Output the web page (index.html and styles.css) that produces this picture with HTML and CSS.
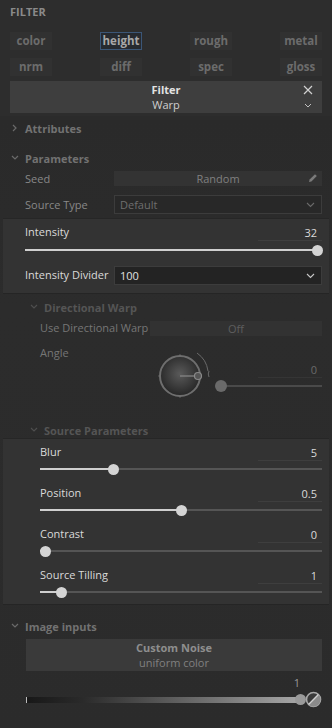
FILE: index.html
```html
<!DOCTYPE html>
<html lang="en">
<head>
  <meta charset="UTF-8">
  <title>Filter | Warp</title>
  <link rel="stylesheet" href="styles.css">
</head>
<body>
  <div class="app">
    <div class="top">
      <div class="title">FILTER</div>
      <div class="chans">
        <div class="chan">color</div>
        <div class="chan active">height</div>
        <div class="chan">rough</div>
        <div class="chan">metal</div>
        <div class="chan">nrm</div>
        <div class="chan">diff</div>
        <div class="chan">spec</div>
        <div class="chan">gloss</div>
      </div>
      <div class="filter-head">
        <div class="fh-title">Filter</div>
        <div class="fh-sub">Warp</div>
        <svg class="fh-close" width="10" height="10" viewBox="0 0 10 10"><path d="M1 1L9 9M9 1L1 9" stroke="#d0d0d0" stroke-width="1.2"/></svg>
        <svg class="fh-chev" width="8" height="5" viewBox="0 0 8 5"><path d="M1 1L4 4L7 1" stroke="#c0c0c0" fill="none" stroke-width="1"/></svg>
      </div>
    </div>

    <div class="panel">
      <div class="sec-head attr">
        <svg width="8" height="8" viewBox="0 0 8 8"><path d="M2 1L5 4L2 7" stroke="#6a6a6a" fill="none" stroke-width="1.2"/></svg>
        <span>Attributes</span>
      </div>

      <div class="sec-head params">
        <svg width="8" height="8" viewBox="0 0 8 8"><path d="M1 2L4 5L7 2" stroke="#6a6a6a" fill="none" stroke-width="1.2"/></svg>
        <span>Parameters</span>
      </div>

      <div class="row seed">
        <div class="lbl dim">Seed</div>
        <div class="field">
          <span>Random</span>
          <svg class="pencil" width="10" height="10" viewBox="0 0 10 10"><path d="M1 9L1.6 6.6L7 1.2L8.8 3L3.4 8.4Z" fill="#7a7a7a"/></svg>
        </div>
      </div>

      <div class="row stype">
        <div class="lbl dim">Source Type</div>
        <div class="select dimsel">
          <span>Default</span>
          <svg width="9" height="6" viewBox="0 0 9 6"><path d="M1 1L4.5 4.5L8 1" stroke="#6a6a6a" fill="none" stroke-width="1.1"/></svg>
        </div>
      </div>

      <div class="block intensity">
        <div class="item">
          <div class="item-top">
            <span class="lbl bright">Intensity</span>
            <span class="val">32</span>
          </div>
          <div class="slider"><div class="fill" style="width:100%"></div><div class="thumb" style="left:100%"></div></div>
        </div>
        <div class="row divider">
          <div class="lbl bright">Intensity Divider</div>
          <div class="select">
            <span>100</span>
            <svg width="9" height="6" viewBox="0 0 9 6"><path d="M1 1L4.5 4.5L8 1" stroke="#c8c8c8" fill="none" stroke-width="1.1"/></svg>
          </div>
        </div>
      </div>

      <div class="sec-head sub dwarp">
        <svg width="8" height="8" viewBox="0 0 8 8"><path d="M1 2L4 5L7 2" stroke="#4e4e4e" fill="none" stroke-width="1.2"/></svg>
        <span>Directional Warp</span>
      </div>

      <div class="row usedw">
        <div class="lbl faint">Use Directional Warp</div>
        <div class="field off">Off</div>
      </div>

      <div class="angle">
        <div class="lbl faint">Angle</div>
        <svg class="dial" width="64" height="56" viewBox="0 0 64 56">
          <defs>
            <radialGradient id="dg" cx="50%" cy="45%" r="55%">
              <stop offset="0" stop-color="#5a5a5a"/>
              <stop offset="1" stop-color="#262626"/>
            </radialGradient>
          </defs>
          <circle cx="26" cy="29" r="20" fill="url(#dg)" stroke="#6e6e6e" stroke-width="2"/>
          <path d="M26 7.5V10M26 48V50.5M4.5 29H7" stroke="#6e6e6e" stroke-width="1.5"/>
          <path d="M26 29H44" stroke="#8a8a8a" stroke-width="1.2"/>
          <circle cx="44" cy="29" r="3.5" fill="#555" stroke="#8a8a8a" stroke-width="1.2"/>
          <path d="M43 6A26 26 0 0 1 54 24" stroke="#6a6a6a" fill="none" stroke-width="1"/>
          <path d="M55 24Q53.5 27 55 30" stroke="#6a6a6a" fill="none" stroke-width="1"/>
        </svg>
        <div class="angle-ctl">
          <div class="val faintval">0</div>
          <div class="slider dimslider"><div class="thumb" style="left:0%"></div></div>
        </div>
      </div>

      <div class="sec-head sub sparams">
        <svg width="8" height="8" viewBox="0 0 8 8"><path d="M1 2L4 5L7 2" stroke="#4e4e4e" fill="none" stroke-width="1.2"/></svg>
        <span>Source Parameters</span>
      </div>

      <div class="block source">
        <div class="item">
          <div class="item-top"><span class="lbl bright">Blur</span><span class="val">5</span></div>
          <div class="slider"><div class="fill" style="width:26%"></div><div class="thumb" style="left:26%"></div></div>
        </div>
        <div class="item">
          <div class="item-top"><span class="lbl bright">Position</span><span class="val">0.5</span></div>
          <div class="slider"><div class="fill" style="width:50%"></div><div class="thumb" style="left:50%"></div></div>
        </div>
        <div class="item">
          <div class="item-top"><span class="lbl bright">Contrast</span><span class="val">0</span></div>
          <div class="slider"><div class="fill" style="width:1.8%"></div><div class="thumb" style="left:1.8%"></div></div>
        </div>
        <div class="item">
          <div class="item-top"><span class="lbl bright">Source Tilling</span><span class="val">1</span></div>
          <div class="slider"><div class="fill" style="width:7.4%"></div><div class="thumb" style="left:7.4%"></div></div>
        </div>
      </div>

      <div class="sec-head inputs">
        <svg width="8" height="8" viewBox="0 0 8 8"><path d="M1 2L4 5L7 2" stroke="#6a6a6a" fill="none" stroke-width="1.2"/></svg>
        <span>Image inputs</span>
      </div>

      <div class="noise">
        <div class="noise-title">Custom Noise</div>
        <div class="noise-sub">uniform color</div>
      </div>

      <div class="grad-val">1</div>
      <div class="grad-row">
        <div class="grad"><div class="grad-thumb"></div></div>
        <svg class="grad-icon" width="17" height="17" viewBox="0 0 17 17">
          <circle cx="8.5" cy="8.5" r="7" fill="#3a3a3a" stroke="#a8a8a8" stroke-width="1.6"/>
          <path d="M3.6 13.4L13.4 3.6A7 7 0 0 1 13.4 13.4A7 7 0 0 1 3.6 13.4Z" fill="#8a8a8a"/>
          <path d="M3.6 13.4L13.4 3.6" stroke="#cfcfcf" stroke-width="1.4"/>
        </svg>
      </div>
    </div>
  </div>
</body>
</html>
```

FILE: styles.css
```css
* {
  box-sizing: border-box;
}

body {
  margin: 0;
  background: #2b2b2b;
  font-family: 'Open Sans', 'Liberation Sans', sans-serif;
  font-size: 11px;
  color: #cfcfcf;
}

.app {
  width: 332px;
  height: 728px;
  overflow: hidden;
}

.top {
  padding: 5px 10px 3px;
  background: #2d2d2d;
}

.title {
  height: 14px;
  line-height: 14px;
  font-weight: bold;
  font-size: 11px;
  color: #8a8a8a;
}

.chans {
  margin-top: 13px;
  display: grid;
  grid-template-columns: repeat(4, 42px);
  grid-auto-rows: 18px;
  row-gap: 8px;
  justify-content: space-between;
}

.chan {
  background: #313131;
  color: #6c6c6c;
  font-weight: bold;
  font-size: 11.5px;
  text-align: center;
  line-height: 18px;
}

.chan.active {
  background: #262a30;
  border: 1px solid #3b5677;
  color: #a8a8a8;
  line-height: 16px;
}

.filter-head {
  position: relative;
  margin-top: 5px;
  height: 32px;
  background: #3e3e3e;
  text-align: center;
  padding-top: 1px;
}

.fh-title {
  font-weight: bold;
  color: #e2e2e2;
  line-height: 15px;
}

.fh-sub {
  color: #cfcfcf;
  line-height: 15px;
}

.fh-close {
  position: absolute;
  right: 9px;
  top: 4px;
}

.fh-chev {
  position: absolute;
  right: 10px;
  top: 22px;
}

.panel {
  background: linear-gradient(#2a2a2a, #2c2c2c 30%, #2b2b2b);
  padding-bottom: 40px;
}

.sec-head {
  height: 16px;
  display: flex;
  align-items: center;
  gap: 6px;
  padding-left: 11px;
  font-weight: bold;
  color: #727272;
}

.sec-head.sub {
  padding-left: 30px;
  color: #555;
}

.attr {
  margin-top: 4px;
}

.params {
  margin-top: 14px;
}

.row {
  display: flex;
  align-items: center;
  padding: 0 10px 0 25px;
}

.row .lbl {
  width: 89px;
  flex-shrink: 0;
  white-space: nowrap;
}

.dim {
  color: #888;
}

.faint {
  color: #767676;
}

.bright {
  color: #dadada;
}

.seed {
  margin-top: 4px;
  height: 17px;
}

.field {
  flex: 1;
  height: 15px;
  background: #333;
  color: #808080;
  text-align: center;
  line-height: 15px;
  position: relative;
}

.pencil {
  position: absolute;
  right: 4px;
  top: 2px;
}

.stype {
  margin-top: 7px;
  height: 21px;
}

.select {
  flex: 1;
  height: 19px;
  background: #232323;
  border: 1px solid #3c3c3c;
  display: flex;
  align-items: center;
  justify-content: space-between;
  padding: 0 6px 0 5px;
  color: #e0e0e0;
}

.dimsel {
  background: #282828;
  color: #6e6e6e;
}

.block {
  margin: 3px 3px 0;
  background: #333;
  border-top: 1px solid #262626;
  box-shadow: 0 1px 0 #252525;
}

.intensity {
  padding: 4px 7px 8px 22px;
}

.source {
  margin-top: 0;
  padding: 4px 7px 6px 37px;
}

.source .slider {
  margin-right: 0;
}

.item + .item {
  margin-top: 9px;
}

.item-top {
  height: 16px;
  display: flex;
  justify-content: space-between;
  align-items: center;
}

.val {
  width: 64px;
  text-align: right;
  padding-right: 5px;
  border-bottom: 1px solid #3e3e3e;
  line-height: 15px;
  margin-top: 4px;
  color: #dadada;
}

.slider {
  position: relative;
  height: 12px;
  margin-top: 4px;
  margin-right: 5px;
  background: linear-gradient(#555, #555) no-repeat 0 5px / 100% 2px;
}

.intensity .slider {
  margin-top: 5px;
}

.fill {
  position: absolute;
  left: 0;
  top: 5px;
  height: 2px;
  background: #cfcfcf;
}

.thumb {
  position: absolute;
  top: 1px;
  width: 11px;
  height: 11px;
  margin-left: -5px;
  border-radius: 50%;
  background: #d4d4d4;
}

.intensity .divider {
  padding: 0;
  margin-top: 10px;
  height: 19px;
}

.divider .lbl {
  margin-top: -3px;
}

.dwarp {
  margin-top: 6px;
}

.usedw {
  margin-top: 5px;
  height: 16px;
  padding-left: 40px;
}

.usedw .lbl {
  width: 110px;
  margin-top: -2px;
}

.field.off {
  color: #5e5e5e;
  background: #323232;
}

.angle {
  display: flex;
  padding: 0 10px 0 40px;
  margin-top: 9px;
  height: 77px;
}

.angle .lbl {
  width: 114px;
  height: 16px;
  line-height: 16px;
}

.dial {
  margin-top: 2px;
  flex-shrink: 0;
}

.angle-ctl {
  flex: 1;
  padding-top: 17px;
  display: flex;
  flex-direction: column;
  align-items: flex-end;
}

.faintval {
  color: #6a6a6a;
  border-bottom-color: #353535;
  margin-top: 0;
}

.dimslider {
  width: 100%;
  margin: 2px 0 0;
  background: linear-gradient(#4a4a4a, #4a4a4a) no-repeat 0 5px / 100% 2px;
}

.dimslider .thumb {
  background: #6a6a6a;
  margin-left: -3px;
  width: 12px;
  height: 12px;
  top: 0;
}

.sparams {
  margin-top: 0;
}

.inputs {
  margin-top: 14px;
}

.noise {
  margin: 5px 10px 0 26px;
  height: 32px;
  background: #3a3a3a;
  text-align: center;
  padding-top: 1px;
}

.noise-title {
  font-weight: bold;
  color: #8e8e8e;
  line-height: 15px;
}

.noise-sub {
  color: #808080;
  line-height: 15px;
}

.grad-val {
  margin-top: 5px;
  padding-right: 32px;
  text-align: right;
  font-size: 11px;
  color: #9a9a9a;
  line-height: 14px;
}

.grad-row {
  display: flex;
  align-items: center;
  gap: 3px;
  padding: 0 10px 0 26px;
  margin-top: 1px;
}

.grad {
  flex: 1;
  height: 6px;
  position: relative;
  border-left: 1px solid #bbb;
  background: linear-gradient(90deg, #181818, #2a2a2a 20%, #777 70%, #a8a8a8);
}

.grad-thumb {
  position: absolute;
  right: -4px;
  top: -3px;
  width: 11px;
  height: 11px;
  border-radius: 50%;
  background: #9a9a9a;
}

.grad-icon {
  flex-shrink: 0;
}
```
